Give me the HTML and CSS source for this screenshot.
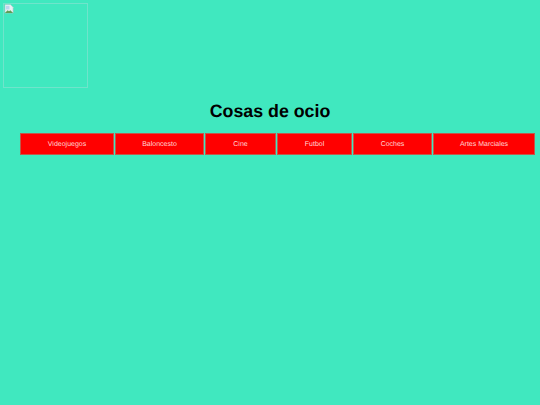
FILE: index.html
```html
<!DOCTYPE html>
<html lang="es">
<head>
  <meta charset="UTF-8" />
  <title>Cosas de ocio</title>
  <link rel="stylesheet" href="styles.css">
</head>
<body>
  <div class="logo">
    <!-- icono de imagen rota -->
    <svg class="broken" width="10" height="10" viewBox="0 0 11 11">
      <path d="M1 .5h6l3 3v6.500H1z" fill="#e8f1f4" stroke="#a9c4c4" stroke-width=".6"/>
      <path d="M2 2h4v4H2z" fill="#bcd6ee"/>
      <path d="M1 10l3-3 1.500 1 1.500-1 3 3z" fill="#5f9e55"/>
    </svg>
  </div>

  <h1 class="title">Cosas de ocio</h1>

  <ul class="menu">
    <li><a href="#">Videojuegos</a></li>
    <li><a href="#">Baloncesto</a></li>
    <li><a href="#">Cine</a></li>
    <li><a href="#">Futbol</a></li>
    <li><a href="#">Coches</a></li>
    <li><a href="#">Artes Marciales</a></li>
  </ul>
</body>
</html>
```

FILE: styles.css
```css
* { box-sizing: border-box; }
body {
  font-family: "Liberation Sans", Arial, sans-serif;
  margin: 0;
  background-color: #40e8bf;
  padding: 3px 5px 0 20px;
  text-rendering: geometricPrecision;
}
.logo {
  width: 85px;
  height: 85px;
  margin-left: -17px;
  border: 1px solid #6fe4cb;
}
.broken {
  display: block;
}
.title {
  margin: 11px 0 0 -20px;
  width: 540px;
  font-size: 17.8px;
  line-height: 24px;
  text-align: center;
  color: #000;
}
.menu {
  list-style: none;
  margin: 10px 0 0;
  padding: 0;
  display: grid;
  grid-template-columns: 94px 89px 71px 75px 79px 1fr;
  column-gap: 1px;
}
.menu li {
  background-color: #f00;
  border: 1px solid #c05a4c;
  height: 22px;
  display: flex;
  align-items: center;
  justify-content: center;
}
.menu a {
  color: #ffd6d6;
  font-size: 7px;
  text-decoration: none;
}
```
